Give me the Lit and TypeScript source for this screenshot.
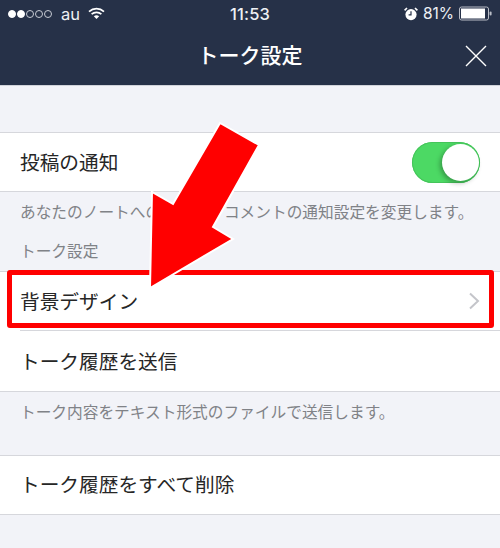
import { LitElement, html, css, svg } from "lit";
import { customElement } from "lit/decorators.js";

@customElement("app-root")
export class AppRoot extends LitElement {
  static styles = css`
    :host {
      display: block;
      position: relative;
      width: 500px;
      height: 548px;
      overflow: hidden;
      background: #f2f3f8;
      font-family: "Inter", "Noto Sans CJK JP", sans-serif;
      color: #222;
    }
    .nav {
      height: 85px;
      background: #263148;
      color: #fff;
      display: flex;
      flex-direction: column;
      border-bottom: 1px solid #d0d3da;
      box-sizing: content-box;
    }
    .status {
      height: 27px;
      display: grid;
      grid-template-columns: 1fr auto 1fr;
      align-items: center;
      padding: 0 8px;
      font-size: 15.5px;
      color: #eef0f4;
    }
    .st-left { display: flex; align-items: center; }
    .dots { display: flex; gap: 1px; margin-right: 9px; }
    .dot { width: 8px; height: 8px; border-radius: 50%; box-sizing: border-box; border: 1px solid #c8ccd4; }
    .dot.on { background: #fff; border-color: #fff; }
    .carrier { margin-right: 8px; font-size: 16.5px; }
    .time { font-weight: 500; font-size: 16.5px; letter-spacing: 0.2px; }
    .st-right { display: flex; align-items: center; justify-content: flex-end; gap: 5px; }
    .title-row {
      flex: 1;
      display: grid;
      grid-template-columns: 1fr auto 1fr;
      align-items: center;
      padding: 0 12px 1px;
    }
    .title { font-size: 21px; font-weight: 500; line-height: 1; }
    .close { justify-self: end; display: block; }
    .spacer { height: 46px; }
    .group { background: #fff; border-top: 1px solid #d6d7dc; border-bottom: 1px solid #d6d7dc; }
    .row {
      height: 58px;
      padding: 0 20px;
      display: flex;
      align-items: center;
      justify-content: space-between;
      font-size: 19.7px;
      color: #262626;
      box-sizing: border-box;
    }
    .row.raised span { margin-bottom: 2px; }
    .row.send { height: 60px; padding-bottom: 2px; }
    .row.del { padding-bottom: 4px; }
    .divider { height: 1px; background: #d6d7dc; margin-left: 20px; }
    .hint { font-size: 15.7px; color: #808287; padding: 0 20px 2px; height: 40px; box-sizing: border-box; display: flex; align-items: center; white-space: nowrap; }
    .label { font-size: 15.7px; color: #808287; padding: 0 20px 2px; height: 39px; box-sizing: border-box; display: flex; align-items: center; }
    .hint.tall { height: 63px; align-items: flex-start; padding-top: 8px; }
    .switch {
      width: 68px;
      height: 41px;
      border-radius: 21px;
      background: #4cd964;
      position: relative;
      box-shadow: inset 0 0 0 1px #45c45a;
    }
    .knob {
      position: absolute;
      top: 2px;
      right: 1px;
      width: 37px;
      height: 37px;
      border-radius: 50%;
      background: #fff;
      box-shadow: -2px 2px 5px rgba(0, 0, 0, 0.3);
    }
    .highlight {
      position: absolute;
      left: 7px;
      top: 270px;
      width: 487px;
      height: 58px;
      box-sizing: border-box;
      border: 5px solid #f00;
      border-radius: 3px;
      pointer-events: none;
    }
    .arrow { position: absolute; left: 0; top: 0; pointer-events: none; }
  `;

  render() {
    return html`
      <div class="nav">
        <div class="status">
          <div class="st-left">
            <div class="dots">
              <span class="dot on"></span><span class="dot on"></span><span class="dot"></span><span class="dot"></span><span class="dot"></span>
            </div>
            <span class="carrier">au</span>
            <svg width="17" height="13" viewBox="0 0 17 13">
              <path d="M1 4.6C5.4 .6 11.6 .6 16 4.6" fill="none" stroke="#fff" stroke-width="1.7"/>
              <path d="M3.6 7.2C6.4 4.7 10.6 4.7 13.4 7.2" fill="none" stroke="#fff" stroke-width="1.7"/>
              <path d="M5.8 9.2C7.4 7.9 9.6 7.9 11.2 9.2L8.5 12Z" fill="#fff"/>
            </svg>
          </div>
          <div class="time">11:53</div>
          <div class="st-right">
            <svg width="14" height="14" viewBox="0 0 14 14">
              <circle cx="7" cy="7.6" r="5.6" fill="#fff"/>
              <path d="M7 4.2V7.8H4.6" fill="none" stroke="#263148" stroke-width="1.2"/>
              <path d="M.6 3.4L3 1M13.4 3.4L11 1" stroke="#fff" stroke-width="1.6"/>
            </svg>
            <span>81%</span>
            <svg width="33" height="15" viewBox="0 0 33 15">
              <rect x=".5" y="1" width="29" height="13" rx="2" fill="none" stroke="#b9bdc6"/>
              <rect x="2" y="2.5" width="24" height="10" fill="#fff"/>
              <rect x="30.6" y="5.5" width="2" height="4" rx="1" fill="#b9bdc6"/>
            </svg>
          </div>
        </div>
        <div class="title-row">
          <span></span>
          <div class="title">トーク設定</div>
          <svg class="close" width="24" height="24" viewBox="0 0 24 24">
            <path d="M2 2L22 22M22 2L2 22" stroke="#fff" stroke-width="1.4" fill="none"/>
          </svg>
        </div>
      </div>

      <div class="spacer"></div>

      <div class="group">
        <div class="row raised">
          <span>投稿の通知</span>
          <div class="switch"><div class="knob"></div></div>
        </div>
      </div>
      <div class="hint">あなたのノートへのいいね・コメントの通知設定を変更します。</div>
      <div class="label">トーク設定</div>
      <div class="group">
        <div class="row raised">
          <span>背景デザイン</span>
          <svg width="12" height="18" viewBox="0 0 12 18">
            <path d="M2 1.5L10 9L2 16.5" fill="none" stroke="#c4c5ca" stroke-width="2"/>
          </svg>
        </div>
        <div class="divider"></div>
        <div class="row send"><span>トーク履歴を送信</span></div>
      </div>
      <div class="hint tall">トーク内容をテキスト形式のファイルで送信します。</div>
      <div class="group">
        <div class="row del"><span>トーク履歴をすべて削除</span></div>
      </div>

      <div class="highlight"></div>
      <svg class="arrow" width="500" height="548" viewBox="0 0 500 548">
        ${svg`<polygon points="150,288 152,192 173,204 220,123 259,145 213,227 233,239"
          fill="#f00" stroke="#fff" stroke-width="2" stroke-linejoin="miter"/>`}
      </svg>
    `;
  }
}
